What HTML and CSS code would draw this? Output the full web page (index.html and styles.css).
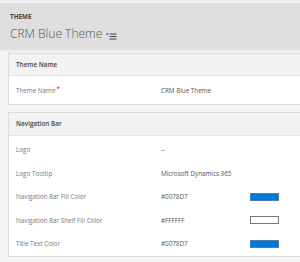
FILE: index.html
```html
<!DOCTYPE html>
<html>
<head>
<meta charset="utf-8">
<link rel="stylesheet" href="styles.css">
</head>
<body>
<div class="page">
  <header class="head">
    <div class="kicker">THEME</div>
    <div class="title-row">
      <span class="title">CRM Blue Theme</span>
      <svg class="menu-ico" width="11" height="7" viewBox="0 0 11 7">
        <path d="M0 0.5 L2.6 0.5 L1.3 2.2 Z" fill="#333"/>
        <rect x="3.5" y="0.5" width="7" height="1" fill="#444"/>
        <rect x="3.5" y="3" width="7" height="1" fill="#444"/>
        <rect x="3.5" y="5.5" width="7" height="1" fill="#444"/>
      </svg>
    </div>
  </header>
  <main class="content">
    <section class="card">
      <div class="card-head">Theme Name</div>
      <div class="card-body single">
        <div class="row">
          <div class="label">Theme Name<span class="req">*</span></div>
          <div class="value">CRM Blue Theme</div>
        </div>
      </div>
    </section>
    <section class="card">
      <div class="card-head tall">Navigation Bar</div>
      <div class="card-body">
        <div class="row">
          <div class="label">Logo</div>
          <div class="value">--</div>
        </div>
        <div class="row">
          <div class="label">Logo Tooltip</div>
          <div class="value">Microsoft Dynamics 365</div>
        </div>
        <div class="row">
          <div class="label">Navigation Bar Fill Color</div>
          <div class="value">#0078D7</div>
          <div class="swatch blue"></div>
        </div>
        <div class="row">
          <div class="label">Navigation Bar Shelf Fill Color</div>
          <div class="value">#FFFFFF</div>
          <div class="swatch white"></div>
        </div>
        <div class="row">
          <div class="label">Title Text Color</div>
          <div class="value">#0078D7</div>
          <div class="swatch blue"></div>
        </div>
      </div>
    </section>
  </main>
</div>
</body>
</html>
```
FILE: styles.css
```css
html, body {
  margin: 0;
  padding: 0;
  height: 100%;
  overflow: hidden;
}
body {
  background: #f4f4f4;
  font-family: "Open Sans", "Segoe UI", sans-serif;
  color: #444;
}
.page {
  border-top: 3px solid #f1f1f1;
}
.head {
  background: #dfdfdf;
  height: 49px;
  box-sizing: border-box;
  padding: 9px 0 0 10px;
  border-bottom: 2px solid #efefef;
}
.kicker {
  font-size: 6.3px;
  font-weight: 700;
  color: #444;
  line-height: 10px;
}
.title-row {
  display: flex;
  align-items: center;
  gap: 4px;
  margin-top: 3px;
}
.title {
  font-size: 12px;
  font-weight: 300;
  color: #555;
  line-height: 18px;
}
.menu-ico {
  margin-top: 4px;
}
.content {
  padding: 1px 0 0 8px;
  display: flex;
  flex-direction: column;
  gap: 7px;
}
.card {
  border: 1px solid #dadada;
  border-right: none;
  background: #fff;
  margin-right: -4px;
}
.card-head {
  background: #f2f2f2;
  height: 21px;
  line-height: 21px;
  padding-left: 7px;
  font-size: 6.4px;
  font-weight: 600;
  color: #444;
  border-bottom: 1px solid #e4e4e4;
}
.card-head.tall {
  height: 22px;
  line-height: 22px;
}
.card-body.single .row {
  height: 28px;
}
.row {
  display: flex;
  align-items: center;
  height: 23.5px;
  padding-left: 7px;
  font-size: 6.3px;
}
.card-body {
  padding-top: 2px;
}
.card-body.single {
  padding-top: 0;
}
.label {
  width: 145px;
  color: #777;
}
.req {
  color: #e00;
  margin-left: 1px;
  position: relative;
  top: -2px;
}
.value {
  width: 89px;
  color: #555;
}
.swatch {
  width: 27px;
  height: 6px;
  border: 1px solid #888;
}
.swatch.blue {
  background: #0078d7;
  border-color: #4a7fae;
}
.swatch.white {
  background: #fff;
  border-color: #777;
}
```
